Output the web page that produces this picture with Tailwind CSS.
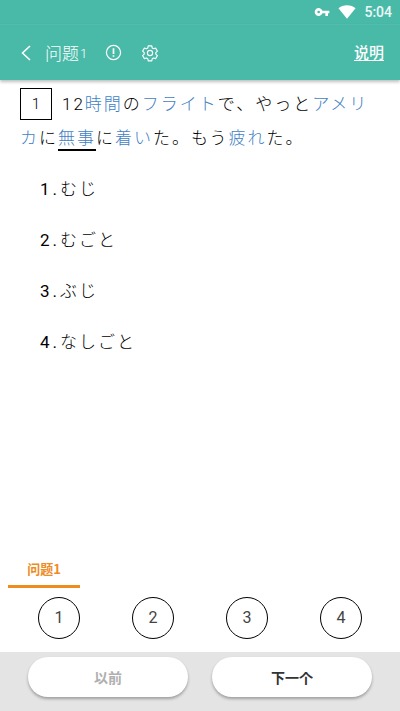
<!DOCTYPE html>
<html lang="ja">
<head>
    <meta charset="UTF-8">
    <meta name="viewport" content="width=device-width, initial-scale=1.0">
    <title>問題</title>
    <script src="https://cdn.jsdelivr.net/npm/@tailwindcss/browser@4"></script>
</head>
<body class="bg-white font-['Roboto','Noto_Sans_CJK_JP',sans-serif]">
    <div class="w-[400px] h-[711px] flex flex-col overflow-hidden">

        <!-- status bar -->
        <div class="h-6 bg-[#49baa8] flex items-center justify-end pr-2 gap-2 text-white/90">
            <svg class="w-4 h-4" viewBox="0 0 24 24" fill="#fff"><path d="M12.65 10A6 6 0 1 0 12.65 14H17v4h4v-4h2v-4H12.65zM7 14a2 2 0 1 1 0-4 2 2 0 0 1 0 4z"/></svg>
            <svg class="w-[18px] h-[18px]" viewBox="0 0 24 24" fill="#fff"><path d="M12 21 .6 7C3.6 4.4 7.600 3 12 3s8.400 1.400 11.400 4L12 21z"/></svg>
            <span class="text-[14px] font-medium w-[28px] text-right">5:04</span>
        </div>

        <!-- toolbar -->
        <div class="h-14 bg-[#49baa8] border-t border-white/5 shadow-[0_2px_3px_rgba(0,0,0,0.25)] z-10 flex items-center pl-5 pr-4 text-white">
            <svg class="w-[12px] h-[18px]" viewBox="0 0 12 18" fill="none" stroke="#fff" stroke-width="1.600"><path d="M10 2 2.500 9 10 16"/></svg>
            <span class="ml-[13px] text-[17px] font-['Noto_Sans_CJK_SC'] font-light">问题</span>
            <span class="ml-px mt-[3px] text-[13px] font-light">1</span>
            <svg class="ml-[18px] w-[17px] h-[17px]" viewBox="0 0 18 18" fill="none" stroke="#fff" stroke-width="1.300"><circle cx="9" cy="9" r="7.500"/><path d="M9 4.500v6M9 12v1.500" stroke-width="1.800"/></svg>
            <svg class="ml-[19px] w-[18px] h-[18px]" viewBox="0 0 24 24" fill="none" stroke="#fff" stroke-width="1.500" stroke-linejoin="round"><path d="M9.600 2.500h4.800l.6 2.900 1.700 1 2.800-.9 2.400 4.100-2.200 2v1.800l2.200 2-2.400 4.100-2.800-.9-1.700 1-.6 2.900H9.600l-.6-2.900-1.700-1-2.800.9-2.400-4.100 2.200-2v-1.800l-2.200-2 2.400-4.100 2.800.9 1.700-1z"/><circle cx="12" cy="12" r="3.500"/></svg>
            <span class="ml-auto text-[15px] font-medium underline underline-offset-2 font-['Noto_Sans_CJK_SC']">说明</span>
        </div>

        <!-- question -->
        <div class="flex-1 pl-5 pr-4 pt-[7px]">
            <div class="text-[17px] leading-[34px] tracking-[2px] text-black font-light">
                <div class="float-left w-8 h-8 mt-px mr-[10px] border border-black flex items-center justify-center text-[15px] leading-none tracking-normal">1</div>
                12<span class="text-[#3f7fc4]">時間</span>の<span class="text-[#3f7fc4]">フライト</span>で、やっと<span class="text-[#3f7fc4]">アメリカ</span>に<span class="text-[#3f7fc4] border-b-2 border-black pb-px">無事</span>に<span class="text-[#3f7fc4]">着い</span>た。もう<span class="text-[#3f7fc4]">疲れ</span>た。
            </div>
            <div class="clear-both mt-[17px] pl-5 flex flex-col gap-[17px] text-[17px] leading-[34px] tracking-[2px] text-black font-light">
                <div><span class="font-normal tracking-[3px]">1.</span>むじ</div>
                <div><span class="font-normal tracking-[3px]">2.</span>むごと</div>
                <div><span class="font-normal tracking-[3px]">3.</span>ぶじ</div>
                <div><span class="font-normal tracking-[3px]">4.</span>なしごと</div>
            </div>
        </div>

        <!-- tab and answers -->
        <div class="w-[72px] ml-2 border-b-[3px] border-[#ee8c1f] text-center text-[13px] font-bold leading-5 pb-[6px] text-[#ee8c1f] font-['Noto_Sans_CJK_SC']">问题1</div>
        <div class="h-[64px] pl-[38px] pt-[9px] flex gap-[52px] text-[16px] text-[#444]">
            <div class="w-[42px] h-[42px] rounded-full border border-black flex items-center justify-center">1</div>
            <div class="w-[42px] h-[42px] rounded-full border border-black flex items-center justify-center">2</div>
            <div class="w-[42px] h-[42px] rounded-full border border-black flex items-center justify-center">3</div>
            <div class="w-[42px] h-[42px] rounded-full border border-black flex items-center justify-center">4</div>
        </div>

        <!-- footer buttons -->
        <div class="h-[59px] bg-[#e4e4e4] pl-7 pt-[5px] flex gap-6 font-['Noto_Sans_CJK_SC'] text-[14px] font-bold">
            <button class="w-40 h-10 rounded-[20px] bg-white text-[#b0b0b0] shadow-[0_2px_3px_rgba(0,0,0,0.3)]">以前</button>
            <button class="w-40 h-10 rounded-[20px] bg-white text-[#333] shadow-[0_2px_3px_rgba(0,0,0,0.3)]">下一个</button>
        </div>
    </div>
</body>
</html>
